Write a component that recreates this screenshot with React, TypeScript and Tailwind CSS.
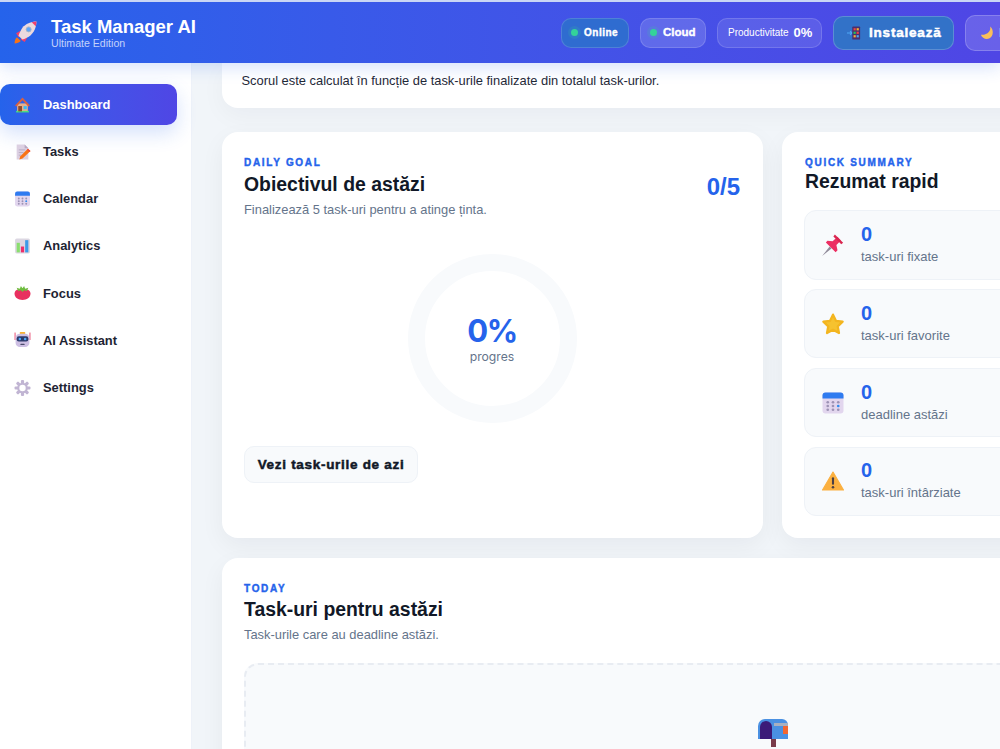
import type { ReactNode } from "react";

// emoji style icons drawn by hand, there is no colour emoji font here
const RocketIcon = () => (
  <svg viewBox="0 0 32 32" className="h-[25px] w-[25px]">
    <path d="M5 22c-2 2-3 5-3 8 3 0 6-1 8-3z" fill="#f97316" />
    <path d="M9 14l-5 3 3 5 5-2z" fill="#ef3e6d" />
    <path d="M18 23l-3 5-5-3 2-5z" fill="#ef3e6d" />
    <path d="M30 2c-7 0-14 3-18 8-2 3-4 7-5 10l5 5c3-1 7-3 10-5 5-4 8-11 8-18z" fill="#ecd9de" />
    <path d="M30 2c-2 0-4 .3-6 .9L29.100 8C29.700 6 30 4 30 2z" fill="#ef3e6d" />
    <circle cx="20" cy="12" r="3.200" fill="#60a5fa" stroke="#a5b4c8" strokeWidth="1.200" />
  </svg>
);

const HouseIcon = () => (
  <svg viewBox="0 0 32 32" className="h-[18px] w-[18px]">
    <rect x="6" y="13" width="20" height="16" fill="#eab08a" />
    <rect x="4" y="27" width="24" height="3" fill="#4ade80" />
    <path d="M16 2L2 17l3 2L16 7l11 12 3-2z" fill="#d9603f" />
    <rect x="8" y="18" width="7" height="10" fill="#8d4a2c" />
    <rect x="18" y="18" width="6" height="6" fill="#38bdf8" />
  </svg>
);

const MemoIcon = () => (
  <svg viewBox="0 0 32 32" className="h-[18px] w-[18px]">
    <path d="M5 2h15l7 7v21H5z" fill="#dcd0e2" />
    <path d="M20 2l7 7h-7z" fill="#b7a8c2" />
    <path d="M9 12h12M9 17h9M9 22h5" stroke="#b5a8c0" strokeWidth="1.600" />
    <path d="M26 10l5 4-15 14-6 2 2-6z" fill="#f97316" />
    <path d="M26 10l5 4-2 2-4-4z" fill="#ef4444" />
  </svg>
);

const CalendarIcon = ({ size = "h-[18px] w-[18px]" }: { size?: string }) => (
  <svg viewBox="0 0 32 32" className={size}>
    <rect x="2" y="2" width="28" height="28" rx="4" fill="#e2d6ee" />
    <path d="M2 10V6a4 4 0 014-4h20a4 4 0 014 4v4z" fill="#2f7bf0" />
    <g fill="#9d93b5">
      <circle cx="9" cy="15" r="1.800" />
      <circle cx="16" cy="15" r="1.800" />
      <circle cx="23" cy="15" r="1.800" />
      <circle cx="9" cy="20" r="1.800" />
      <circle cx="16" cy="20" r="1.800" />
      <circle cx="23" cy="20" r="1.800" fill="#2f8cf0" />
      <circle cx="9" cy="25" r="1.800" />
      <circle cx="16" cy="25" r="1.800" />
      <circle cx="23" cy="25" r="1.800" />
    </g>
  </svg>
);

const ChartIcon = () => (
  <svg viewBox="0 0 32 32" className="h-[18px] w-[18px]">
    <rect x="2" y="2" width="28" height="28" rx="3" fill="#dcd7e2" />
    <rect x="5" y="10" width="6" height="18" fill="#8ade6e" />
    <rect x="13" y="17" width="6" height="11" fill="#ec2f6b" />
    <rect x="21" y="5" width="6" height="23" fill="#3b9be8" />
  </svg>
);

const TomatoIcon = () => (
  <svg viewBox="0 0 32 32" className="h-[18px] w-[18px]">
    <path d="M1 17c0-6 6-9 15-9s15 3 15 9c0 8-7 12-15 12S1 25 1 17z" fill="#e8305f" />
    <path d="M5 6l6 2 2-5 3 4 3-4 2 5 6-2-3 6-5-1-3 3-3-3-5 1z" fill="#6ebd3f" />
  </svg>
);

const RobotIcon = () => (
  <svg viewBox="0 0 32 32" className="h-[18px] w-[18px]">
    <path d="M2 2v14M30 2v14" stroke="#e8456b" strokeWidth="1.800" />
    <rect x="11" y="1" width="10" height="4" rx="1" fill="#f9b233" />
    <rect x="3" y="4" width="26" height="25" rx="8" fill="#cdbfe3" />
    <rect x="5" y="9" width="22" height="10" rx="4" fill="#2d3a6b" />
    <circle cx="11" cy="14" r="2.400" fill="#4fa8f5" />
    <circle cx="21" cy="14" r="2.400" fill="#4fa8f5" />
    <rect x="12" y="23" width="8" height="2.500" rx="1" fill="#4b4a6b" />
  </svg>
);

const GearIcon = () => (
  <svg viewBox="0 0 32 32" className="h-[18px] w-[18px]">
    <g fill="#c1b5d3">
      <circle cx="16" cy="16" r="10" />
      <rect x="13" y="1" width="6" height="30" rx="2" />
      <rect x="13" y="1" width="6" height="30" rx="2" transform="rotate(45 16 16)" />
      <rect x="13" y="1" width="6" height="30" rx="2" transform="rotate(90 16 16)" />
      <rect x="13" y="1" width="6" height="30" rx="2" transform="rotate(135 16 16)" />
    </g>
    <circle cx="16" cy="16" r="6" fill="#ffffff" />
  </svg>
);

const PinIcon = () => (
  <svg viewBox="0 0 32 32" className="h-[26px] w-[26px]">
    <path d="M1.500 30.500L11.500 18l2.500 2.500z" fill="#8f8a99" />
    <path d="M6.500 12.500L19.500 25.500 22 23l-1.500-7 6-6-4.500-5-6.500 6-7-.8z" fill="#ec2f63" />
    <path d="M16.500 4.500l2-2.500 11 11-2.500 2z" fill="#d9264f" />
  </svg>
);

const StarIcon = () => (
  <svg viewBox="0 0 32 32" className="h-[26px] w-[26px]">
    <path
      d="M16 3.500l3.900 8.200 9 1.200-6.600 6.200 1.700 8.900-8-4.300-8 4.300 1.700-8.900-6.600-6.200 9-1.200z"
      fill="#f6c22f"
      stroke="#f3b51f"
      strokeWidth="3"
      strokeLinejoin="round"
    />
  </svg>
);

const WarningIcon = () => (
  <svg viewBox="0 0 32 32" className="h-6 w-6">
    <path d="M16 4L2 28h28z" fill="#fbb040" stroke="#fbb040" strokeWidth="1.500" strokeLinejoin="round" />
    <rect x="14.600" y="11" width="2.800" height="10" rx="1.200" fill="#4a3f45" />
    <circle cx="16" cy="24.200" r="1.700" fill="#4a3f45" />
  </svg>
);

const MailboxIcon = () => (
  <svg viewBox="0 0 32 32" className="h-8 w-8">
    <rect x="14" y="23" width="5" height="9" fill="#7a3b4a" />
    <path d="M8 4h17a6 6 0 016 6v14H1V11a7 7 0 017-7z" fill="#4a90e2" />
    <path d="M3 24V12a6 6 0 0112 0v12z" fill="#3b1a78" />
    <path d="M17 8h14v3H17z" fill="#a8b0c0" />
    <rect x="26" y="11" width="5" height="8" fill="#f4662f" />
  </svg>
);

const MoonIcon = () => (
  <svg viewBox="0 0 32 32" className="h-[14px] w-[14px]">
    <path d="M23 1c3 9-5 20-21 19 3 8 12 12 20 8 9-5 10-20 1-27z" fill="#fbbf5a" />
  </svg>
);

const InstallIcon = () => (
  <svg viewBox="0 0 32 32" className="h-[14px] w-[14px]">
    <path d="M0 16h11M7 12l5 4-5 4" stroke="#4fa8f5" strokeWidth="2.500" fill="none" />
    <rect x="12" y="1" width="18" height="30" rx="2" fill="#4a2f6e" />
    <rect x="15" y="5" width="5" height="5" fill="#ef4444" />
    <rect x="22" y="5" width="5" height="5" fill="#f9b233" />
    <rect x="15" y="13" width="5" height="5" fill="#22c55e" />
    <rect x="22" y="13" width="5" height="5" fill="#ef4444" />
    <rect x="15" y="21" width="5" height="5" fill="#f9b233" />
    <rect x="22" y="21" width="5" height="5" fill="#4fa8f5" />
  </svg>
);

const navItems: { label: string; icon: ReactNode; active?: boolean }[] = [
  { label: "Dashboard", icon: <HouseIcon />, active: true },
  { label: "Tasks", icon: <MemoIcon /> },
  { label: "Calendar", icon: <CalendarIcon /> },
  { label: "Analytics", icon: <ChartIcon /> },
  { label: "Focus", icon: <TomatoIcon /> },
  { label: "AI Assistant", icon: <RobotIcon /> },
  { label: "Settings", icon: <GearIcon /> },
];

const summary: { label: string; icon: ReactNode }[] = [
  { label: "task-uri fixate", icon: <PinIcon /> },
  { label: "task-uri favorite", icon: <StarIcon /> },
  { label: "deadline astăzi", icon: <CalendarIcon size="h-6 w-6" /> },
  { label: "task-uri întârziate", icon: <WarningIcon /> },
];

const Eyebrow = ({ children }: { children: ReactNode }) => (
  <div className="text-[10px] leading-[12px] font-bold tracking-[1.7px] text-[#2563eb] [-webkit-text-stroke:0.4px]">{children}</div>
);

const Dot = () => <span className="h-[7px] w-[7px] shrink-0 rounded-full bg-[#34d399] shadow-[0_0_0_3px_rgba(52,211,153,0.15)]" />;

export default function App() {
  return (
    <div className="flex h-[749px] w-[1000px] flex-col overflow-hidden bg-[#f1f5f9] font-['Liberation_Sans',sans-serif] text-[#111827]">
      <header className="relative z-20 flex h-[63px] shrink-0 items-center justify-between overflow-hidden border-t-2 border-[#c9d6f5] bg-gradient-to-r from-[#2563eb] to-[#4f46e5] pl-[13px] shadow-[0_4px_16px_rgba(37,99,235,0.2)]">
        <div className="flex items-center gap-[13px]">
          <RocketIcon />
          <div className="-mt-[1px]">
            <div className="text-[18.5px] leading-[21px] font-bold text-white">Task Manager AI</div>
            <div className="text-[10.6px] leading-[12px] text-[#c3d2fb]">Ultimate Edition</div>
          </div>
        </div>
        <div className="flex w-[439px] shrink-0 items-center gap-[11px] text-white">
          <div className="flex h-[30px] w-[68px] shrink-0 items-center gap-[6px] rounded-[10px] border border-white/15 bg-[#2f6cd0] pl-[9px] text-[10px] font-bold tracking-[0.5px] [-webkit-text-stroke:0.4px]">
            <Dot />
            Online
          </div>
          <div className="flex h-[30px] w-[66px] shrink-0 items-center gap-[6px] rounded-[10px] border border-white/15 bg-white/15 pl-[9px] text-[11.5px] font-bold [-webkit-text-stroke:0.4px]">
            <Dot />
            Cloud
          </div>
          <div className="flex h-[30px] w-[105px] shrink-0 items-center gap-[5px] rounded-[10px] border border-white/15 bg-white/10 pl-[10px] text-[10px]">
            Productivitate
            <span className="text-[13px] font-bold">0%</span>
          </div>
          <div className="flex h-[34px] w-[121px] shrink-0 items-center gap-[8px] rounded-[10px] border border-white/20 bg-[#3272c8] pl-[13px] text-[13.5px] font-bold tracking-[0.8px] [-webkit-text-stroke:0.5px]">
            <InstallIcon />
            <span className="pt-[1px]">Instalează</span>
          </div>
          <div className="flex h-[36px] w-[80px] shrink-0 items-center gap-[5px] rounded-[10px] border border-white/20 bg-white/15 pl-[14px] text-[13px] font-bold">
            <MoonIcon />
            Light
          </div>
        </div>
      </header>
      <div className="flex min-h-0 flex-1">
        <aside className="w-[192px] shrink-0 border-r border-[#eef2f9] bg-white pt-[21px] pr-[14px]">
          <nav className="flex flex-col gap-[6.200px]">
            {navItems.map((item) => (
              <div
                key={item.label}
                className={`flex h-[41px] items-center gap-[12px] rounded-[10px] pl-[14px] text-[12.9px] font-bold ${
                  item.active
                    ? "bg-gradient-to-r from-[#2563eb] to-[#4f46e5] text-white shadow-[0_8px_20px_rgba(37,99,235,0.2)]"
                    : "text-[#1e2433]"
                }`}
              >
                <span className="flex w-[17px] shrink-0 justify-center">{item.icon}</span>
                <span>{item.label}</span>
              </div>
            ))}
          </nav>
        </aside>
        <main className="flex min-w-0 flex-1 flex-col gap-[20px] overflow-hidden pl-[30px]">
          <div className="mb-[4px] flex h-[45px] w-[1102px] shrink-0 items-start rounded-b-[16px] bg-white pt-[10px] pl-[19.500px] text-[12.9px] leading-[16px] text-[#1f2937] shadow-[0_8px_24px_rgba(15,23,42,0.04)]">
            Scorul este calculat în funcție de task-urile finalizate din totalul task-urilor.
          </div>
          <div className="flex shrink-0 gap-[19px]">
            <section className="flex h-[406px] w-[541px] shrink-0 flex-col rounded-[16px] bg-white pt-[25px] pr-[23px] pl-[22px] shadow-[0_8px_24px_rgba(15,23,42,0.05)]">
              <Eyebrow>DAILY GOAL</Eyebrow>
              <div className="mt-[3px] flex items-start justify-between">
                <h2 className="text-[19.4px] leading-[24px] font-bold">Obiectivul de astăzi</h2>
                <span className="mt-[1px] text-[24px] leading-[28px] font-bold text-[#2563eb]">0/5</span>
              </div>
              <p className="mt-[1px] text-[12.9px] leading-[16px] text-[#64748b]">Finalizează 5 task-uri pentru a atinge ținta.</p>
              <div className="mt-[36px] flex h-[169px] w-[169px] flex-col items-center justify-center self-center rounded-full border-[17px] border-[#f8fafc]">
                <span className="font-['Inter',sans-serif] text-[31px] leading-[36px] font-bold tracking-[-1.5px] text-[#2563eb]">0%</span>
                <span className="font-['Inter',sans-serif] text-[12.2px] leading-[16px] text-[#64748b]">progres</span>
              </div>
              <button className="mt-[23px] h-[37px] w-[174px] rounded-[10px] border border-[#eef2f7] bg-[#f8fafc] pt-[1px] text-[13.5px] font-bold tracking-[0.7px] text-[#111827] [-webkit-text-stroke:0.5px]">
                Vezi task-urile de azi
              </button>
            </section>
            <section className="h-[406px] w-[542px] shrink-0 rounded-[16px] bg-white pt-[25px] pl-[23px] shadow-[0_8px_24px_rgba(15,23,42,0.05)]">
              <Eyebrow>QUICK SUMMARY</Eyebrow>
              <h2 className="text-[19.4px] leading-[24px] font-bold">Rezumat rapid</h2>
              <div className="mt-[17px] mr-[22px] -ml-[1px] flex flex-col gap-[9.400px]">
                {summary.map((row) => (
                  <div key={row.label} className="flex h-[69.500px] items-center gap-[16px] rounded-[12px] border border-[#eef2f7] bg-[#f8fafc] pl-[16px]">
                    <span className="flex w-[24px] justify-center">{row.icon}</span>
                    <div className="-mt-[1px]">
                      <div className="text-[20px] leading-[22px] font-bold text-[#2563eb]">0</div>
                      <div className="mt-[3px] text-[13px] leading-[18px] text-[#64748b]">{row.label}</div>
                    </div>
                  </div>
                ))}
              </div>
            </section>
          </div>
          <section className="w-[1102px] shrink-0 rounded-[16px] bg-white px-[22px] pt-[25px] pb-[40px] shadow-[0_8px_24px_rgba(15,23,42,0.05)]">
            <Eyebrow>TODAY</Eyebrow>
            <h2 className="mt-[2px] text-[19.4px] leading-[24px] font-bold">Task-uri pentru astăzi</h2>
            <p className="mt-[3px] text-[12.9px] leading-[22px] text-[#64748b]">Task-urile care au deadline astăzi.</p>
            <div className="mt-[17px] flex h-[200px] justify-center rounded-[14px] border-2 border-dashed border-[#e8ecf2] bg-[#f8fafc] pt-[50px]">
              <MailboxIcon />
            </div>
          </section>
        </main>
      </div>
    </div>
  );
}
